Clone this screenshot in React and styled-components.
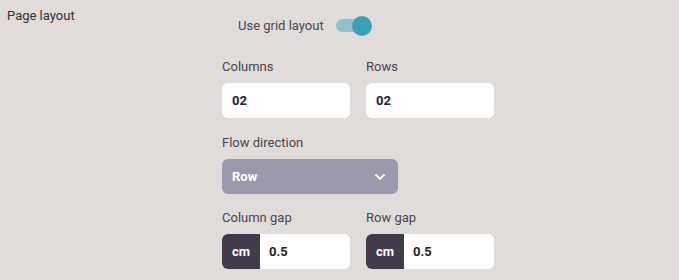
import React, { useState } from "react";
import styled, { createGlobalStyle } from "styled-components";

const GlobalStyle = createGlobalStyle`
  html, body {
    margin: 0;
    background: #e0dcd9;
    font-family: Roboto, "Liberation Sans", sans-serif;
  }
`;

const Page = styled.div`
  display: flex;
  width: 679px;
  height: 280px;
  overflow: hidden;
`;

const SectionTitle = styled.div`
  width: 215px;
  padding: 8px 0 0 7px;
  font-size: 13px;
  line-height: 16px;
  color: #333033;
`;

const Settings = styled.div`
  display: flex;
  flex-direction: column;
  padding-top: 18px;
`;

const ToggleRow = styled.label`
  display: flex;
  align-items: center;
  gap: 12px;
  height: 20px;
  padding-left: 16px;
  margin-bottom: 26px;
  font-size: 13px;
  color: #4a4552;
`;

const Track = styled.span`
  position: relative;
  display: inline-block;
  width: 32px;
  height: 13px;
  border-radius: 7px;
  background: ${(p) => (p.$on ? "#8fc1ca" : "#bdb8b6")};
  cursor: pointer;
`;

const Thumb = styled.span`
  position: absolute;
  top: -3.5px;
  left: ${(p) => (p.$on ? "16px" : "-2px")};
  width: 20px;
  height: 20px;
  border-radius: 50%;
  background: ${(p) => (p.$on ? "#3aa0b4" : "#f5f5f5")};
`;

const Pair = styled.div`
  display: grid;
  grid-template-columns: 128px 128px;
  column-gap: 16px;
  margin-bottom: 17px;
`;

const Field = styled.div`
  display: flex;
  flex-direction: column;
  margin-bottom: ${(p) => p.$mb || 0}px;
`;

const Label = styled.div`
  font-size: 13px;
  line-height: 16px;
  color: #4a4552;
  margin-bottom: 8px;
`;

const Box = styled.div`
  display: flex;
  align-items: center;
  height: 35px;
  width: ${(p) => p.$w || 128}px;
  box-sizing: border-box;
  border-radius: 6px;
  overflow: hidden;
  background: ${(p) => p.$bg || "#ffffff"};
  font-size: 13px;
  font-weight: 700;
  color: #262326;
`;

const Value = styled.span`
  padding-left: ${(p) => p.$pl || 10}px;
  flex: 1;
`;

const Unit = styled.span`
  display: flex;
  align-items: center;
  justify-content: center;
  width: 38px;
  height: 100%;
  background: #403c4b;
  color: #ffffff;
`;

const SelectText = styled.span`
  flex: 1;
  padding-left: 10px;
  color: #ffffff;
`;

const Chevron = styled.svg`
  margin-right: 12px;
`;

function NumberField({ label, value }) {
  return (
    <Field>
      <Label>{label}</Label>
      <Box>
        <Value>{value}</Value>
      </Box>
    </Field>
  );
}

function UnitField({ label, value }) {
  return (
    <Field>
      <Label>{label}</Label>
      <Box>
        <Unit>cm</Unit>
        <Value $pl={9}>{value}</Value>
      </Box>
    </Field>
  );
}

export default function App() {
  const [grid, setGrid] = useState(true);

  return (
    <Page>
      <GlobalStyle />
      <SectionTitle>Page layout</SectionTitle>
      <Settings>
        <ToggleRow onClick={() => setGrid(!grid)}>
          Use grid layout
          <Track $on={grid}>
            <Thumb $on={grid} />
          </Track>
        </ToggleRow>

        <Pair>
          <NumberField label="Columns" value="02" />
          <NumberField label="Rows" value="02" />
        </Pair>

        <Field $mb={16}>
          <Label>Flow direction</Label>
          <Box $w={176} $bg="#9c99ac">
            <SelectText>Row</SelectText>
            <Chevron width="12" height="8" viewBox="0 0 12 8">
              <path d="M1.5 1.5 L6 6 L10.5 1.5" fill="none" stroke="#ffffff" strokeWidth="1.8" />
            </Chevron>
          </Box>
        </Field>

        <Pair>
          <UnitField label="Column gap" value="0.5" />
          <UnitField label="Row gap" value="0.5" />
        </Pair>
      </Settings>
    </Page>
  );
}
